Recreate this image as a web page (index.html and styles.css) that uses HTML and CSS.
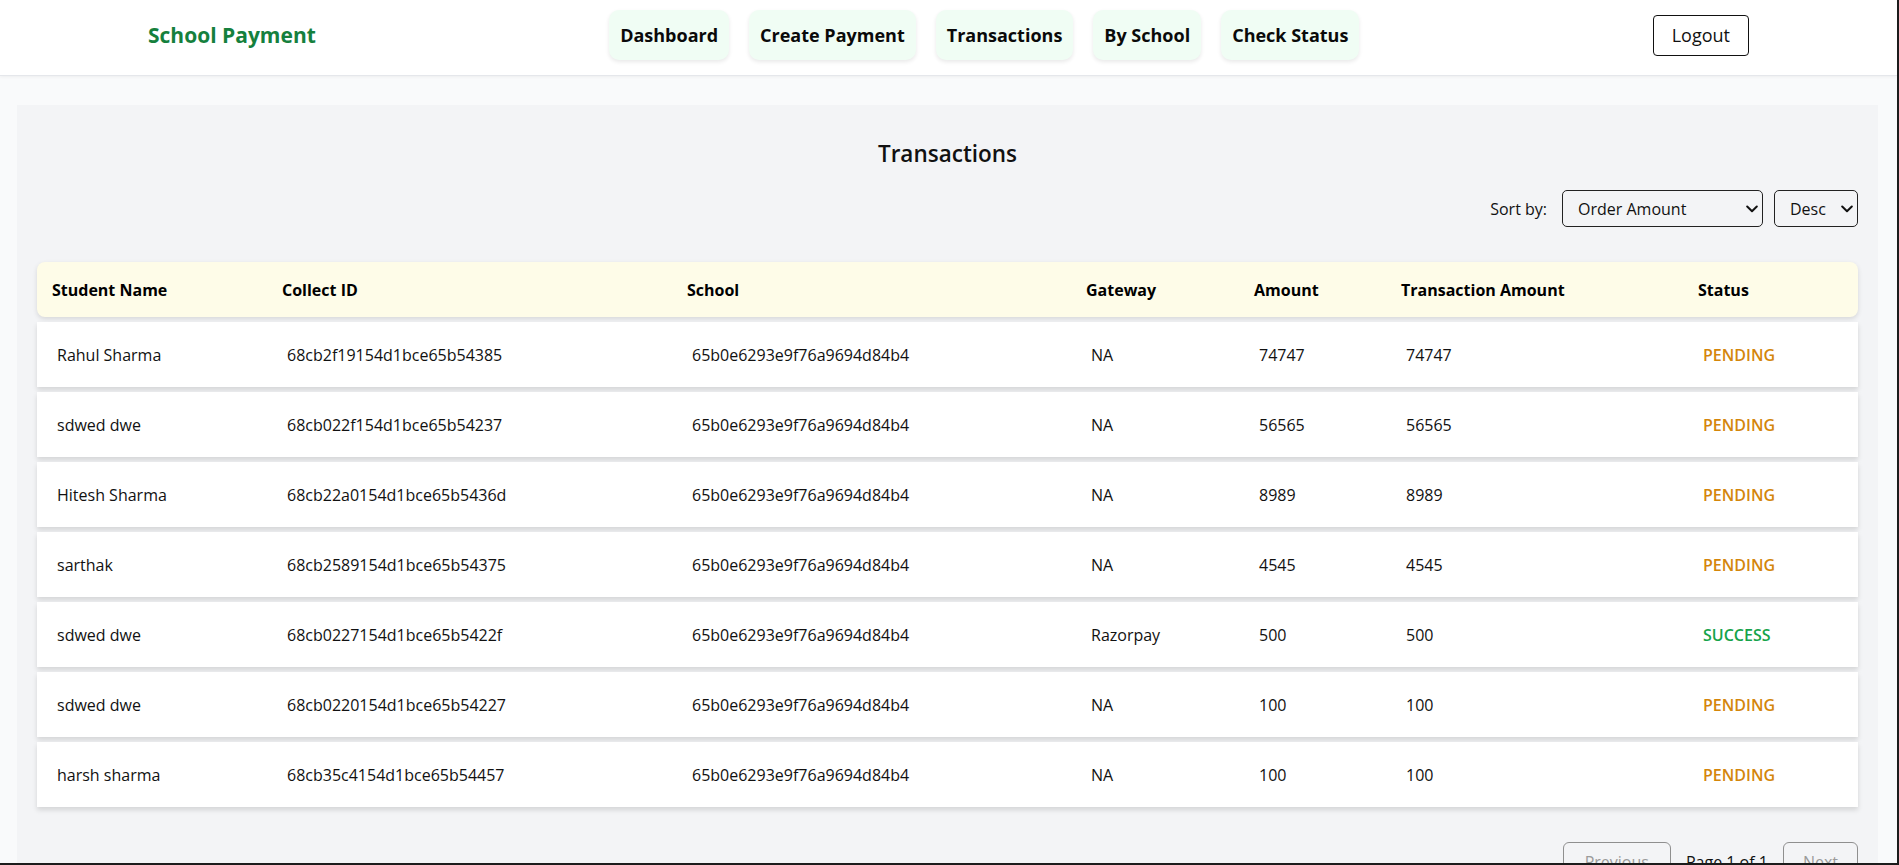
FILE: index.html
```html
<!DOCTYPE html>
<html lang="en">
<head>
<meta charset="utf-8">
<title>School Payment - Transactions</title>
<link rel="stylesheet" href="styles.css">
</head>
<body>
<div class="app">
  <header class="navbar">
    <div class="brand">School Payment</div>
    <nav class="nav">
      <a class="nav-btn">Dashboard</a>
      <a class="nav-btn">Create Payment</a>
      <a class="nav-btn">Transactions</a>
      <a class="nav-btn">By School</a>
      <a class="nav-btn">Check Status</a>
    </nav>
    <button class="logout">Logout</button>
  </header>

  <main class="main">
    <section class="panel">
      <h2 class="title">Transactions</h2>
      <div class="sort-row">
        <span class="sort-label">Sort by:</span>
        <div class="select-wrap field">
          <select class="select"><option>Order Amount</option></select>
          <svg class="chev" width="12" height="8" viewBox="0 0 12 8"><path d="M1.2 1.5 L6 6.2 L10.8 1.5" fill="none" stroke="#111" stroke-width="2" stroke-linecap="round" stroke-linejoin="round"/></svg>
        </div>
        <div class="select-wrap order">
          <select class="select"><option>Desc</option></select>
          <svg class="chev" width="12" height="8" viewBox="0 0 12 8"><path d="M1.2 1.5 L6 6.2 L10.8 1.5" fill="none" stroke="#111" stroke-width="2" stroke-linecap="round" stroke-linejoin="round"/></svg>
        </div>
      </div>

      <div class="table">
        <div class="thead">
          <div>Student Name</div><div>Collect ID</div><div>School</div><div>Gateway</div><div>Amount</div><div>Transaction Amount</div><div>Status</div>
        </div>
        <div class="row">
          <div>Rahul Sharma</div><div>68cb2f19154d1bce65b54385</div><div>65b0e6293e9f76a9694d84b4</div><div>NA</div><div>74747</div><div>74747</div><div class="pending">PENDING</div>
        </div>
        <div class="row">
          <div>sdwed dwe</div><div>68cb022f154d1bce65b54237</div><div>65b0e6293e9f76a9694d84b4</div><div>NA</div><div>56565</div><div>56565</div><div class="pending">PENDING</div>
        </div>
        <div class="row">
          <div>Hitesh Sharma</div><div>68cb22a0154d1bce65b5436d</div><div>65b0e6293e9f76a9694d84b4</div><div>NA</div><div>8989</div><div>8989</div><div class="pending">PENDING</div>
        </div>
        <div class="row">
          <div>sarthak</div><div>68cb2589154d1bce65b54375</div><div>65b0e6293e9f76a9694d84b4</div><div>NA</div><div>4545</div><div>4545</div><div class="pending">PENDING</div>
        </div>
        <div class="row">
          <div>sdwed dwe</div><div>68cb0227154d1bce65b5422f</div><div>65b0e6293e9f76a9694d84b4</div><div>Razorpay</div><div>500</div><div>500</div><div class="success">SUCCESS</div>
        </div>
        <div class="row">
          <div>sdwed dwe</div><div>68cb0220154d1bce65b54227</div><div>65b0e6293e9f76a9694d84b4</div><div>NA</div><div>100</div><div>100</div><div class="pending">PENDING</div>
        </div>
        <div class="row">
          <div>harsh sharma</div><div>68cb35c4154d1bce65b54457</div><div>65b0e6293e9f76a9694d84b4</div><div>NA</div><div>100</div><div>100</div><div class="pending">PENDING</div>
        </div>
      </div>

      <div class="pagination">
        <button class="page-btn prev" disabled>Previous</button>
        <span class="page-info">Page 1 of 1</span>
        <button class="page-btn" disabled>Next</button>
      </div>
    </section>
  </main>
</div>
<div class="frame"></div>
</body>
</html>
```

FILE: styles.css
```css
* { box-sizing: border-box; }

html, body {
  margin: 0;
  padding: 0;
}

body {
  font-family: "Open Sans", "Liberation Sans", sans-serif;
  font-size: 16px;
  color: #111;
  background: #f9fafb;
}

.app {
  margin-right: 2px;
}

/* Navbar */
.navbar {
  display: flex;
  justify-content: space-between;
  align-items: center;
  padding: 10px 148px 15px 148px;
  background: #ffffff;
  border-bottom: 1px solid #e5e7eb;
  box-shadow: 0 1px 3px rgba(0, 0, 0, 0.05);
}

.brand {
  font-size: 21px;
  font-weight: 700;
  color: #15803d;
  line-height: 30px;
}

.nav {
  display: flex;
  gap: 20px;
}

.nav-btn {
  display: flex;
  align-items: center;
  height: 50px;
  padding: 0 11px;
  background: #f0fdf4;
  border-radius: 10px;
  font-size: 18px;
  font-weight: 700;
  color: #0a0a0a;
  box-shadow: 0 2px 4px rgba(0, 0, 0, 0.09);
  cursor: pointer;
}

.logout {
  height: 41px;
  padding: 0 18px;
  background: #ffffff;
  border: 1px solid #111;
  border-radius: 4px;
  font-family: inherit;
  font-size: 18px;
  color: #111;
}

/* Main */
.main {
  padding-top: 29px;
}

.panel {
  margin: 0 19px 0 17px;
  background: #f3f4f6;
  padding: 0 20px 60px 20px;
}

.title {
  margin: 0;
  padding-top: 33px;
  text-align: center;
  font-size: 22.5px;
  line-height: 32px;
  font-weight: 600;
  color: #111;
}

.sort-row {
  margin-top: 20px;
  display: flex;
  justify-content: flex-end;
  align-items: center;
  gap: 11px;
}

.sort-label {
  margin-right: 4px;
  font-size: 16px;
}

.select-wrap {
  position: relative;
  height: 37px;
}

.select-wrap.field { width: 201px; }
.select-wrap.order { width: 84px; }

.select {
  appearance: none;
  -webkit-appearance: none;
  width: 100%;
  height: 37px;
  padding: 0 26px 0 15px;
  background: transparent;
  border: 1px solid #222;
  border-radius: 5px;
  font-family: inherit;
  font-size: 16px;
  color: #111;
}

.chev {
  position: absolute;
  right: 5px;
  top: 15px;
  pointer-events: none;
}

/* Table */
.table {
  margin-top: 35px;
}

.thead,
.row {
  display: grid;
  grid-template-columns: 230px 405px 399px 168px 147px 297px 175px;
  align-items: center;
}

.thead {
  height: 55px;
  background: #fefce8;
  border-radius: 8px;
  font-weight: 700;
  font-size: 16px;
  color: #000;
  box-shadow: 0 2px 5px rgba(0, 0, 0, 0.12);
}

.thead > div {
  padding-left: 15px;
}

.row {
  margin-top: 5px;
  height: 65px;
  background: #ffffff;
  font-size: 16px;
  color: #111;
  box-shadow: 0 3px 5px rgba(0, 0, 0, 0.13);
}

.row > div {
  padding-left: 20px;
}

.pending {
  color: #d4860b;
  font-weight: 600;
}

.success {
  color: #16a34a;
  font-weight: 600;
}

/* Pagination */
.pagination {
  margin-top: 35px;
  display: flex;
  justify-content: flex-end;
  align-items: center;
  gap: 15px;
}

.page-btn {
  height: 40px;
  padding: 0 19px;
  background: transparent;
  border: 1px solid #8f8f8f;
  border-radius: 6px;
  font-family: inherit;
  font-size: 16px;
  color: #9a9a9a;
}

.page-btn.prev {
  padding: 0 21px;
}

.page-info {
  font-size: 16px;
  color: #111;
}

.frame {
  position: fixed;
  inset: 0;
  border-right: 2px solid #1c1c1c;
  border-bottom: 2px solid #1c1c1c;
  pointer-events: none;
}
```
